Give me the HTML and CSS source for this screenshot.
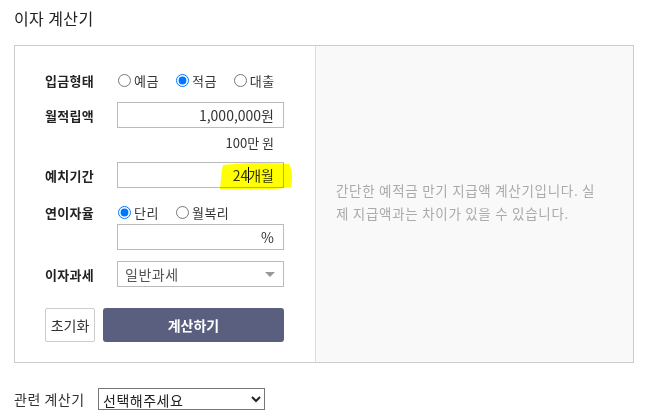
FILE: index.html
```html
<!doctype html>
<html>
  <head>
    <meta charset="utf-8">
    <title>이자 계산기</title>
    <meta name="viewport" content="width=device-width">
    <link rel="stylesheet" href="styles.css">
  </head>
  <body>
    <div class="page">
      <h2 class="title">이자 계산기</h2>

      <div class="calc">
        <div class="calc-form">
          <div class="row">
            <span class="name">입금형태</span>
            <label class="opt"><input type="radio" name="kind">예금</label>
            <label class="opt"><input type="radio" name="kind" checked>적금</label>
            <label class="opt"><input type="radio" name="kind">대출</label>
          </div>

          <div class="row gap-9">
            <span class="name">월적립액</span>
            <input class="field" type="text" value="1,000,000원">
          </div>
          <div class="note">100만 원</div>

          <div class="row gap-10">
            <span class="name">예치기간</span>
            <div class="mark-wrap">
              <input class="field" type="text" value="24개월">
              <svg class="marker" width="80" height="30" viewBox="0 0 80 30">
                <path d="M6 3 C 25 1, 50 0, 72 2 C 75 6, 76 16, 74 25 C 55 28, 30 28, 3 27 C 4 19, 4 10, 6 3 Z" fill="#ffff00"/>
                <rect x="31" y="5" width="1" height="16" fill="#000"/>
              </svg>
            </div>
          </div>

          <div class="row row-sm gap-12">
            <span class="name">연이자율</span>
            <label class="opt"><input type="radio" name="rate" checked>단리</label>
            <label class="opt"><input type="radio" name="rate">월복리</label>
          </div>
          <div class="row">
            <span class="name"></span>
            <input class="field" type="text" value="%">
          </div>

          <div class="row gap-11">
            <span class="name">이자과세</span>
            <div class="select-wrap">
              <select class="field select">
                <option>일반과세</option>
                <option>비과세</option>
                <option>세금우대</option>
              </select>
            </div>
          </div>

          <div class="buttons">
            <button class="btn-reset">초기화</button>
            <button class="btn-calc">계산하기</button>
          </div>
        </div>

        <div class="calc-info">
          <p>간단한 예적금 만기 지급액 계산기입니다. 실제 지급액과는 차이가 있을 수 있습니다.</p>
        </div>
      </div>

      <div class="related">
        <span>관련 계산기</span>
        <select class="related-select">
          <option>선택해주세요</option>
        </select>
      </div>
    </div>
  </body>
</html>
```

FILE: styles.css
```css
body {
	margin: 0;
	font-family: "Noto Sans CJK KR", "Noto Sans", sans-serif;
	color: #333;
	background: #fff;
}
.page {
	padding: 0 14px;
}
.title {
	margin: 0;
	padding-top: 6px;
	height: 39px;
	font-size: 16px;
	font-weight: normal;
	line-height: 24px;
	letter-spacing: 0.4px;
	color: #222;
}

.calc {
	display: flex;
	width: 620px;
	height: 318px;
	box-sizing: border-box;
	border: 1px solid #ccc;
}
.calc-form {
	width: 300px;
	flex: none;
	box-sizing: border-box;
	padding: 21px 31px 0 30px;
}
.calc-info {
	flex: 1;
	display: flex;
	align-items: center;
	background: #f9f9f9;
	border-left: 1px solid #ddd;
	padding: 0 32px 0 20px;
}
.calc-info p {
	margin: 0 0 4px 0;
	font-size: 13.5px;
	line-height: 23px;
	letter-spacing: 0.7px;
	color: #aaa;
	word-break: break-all;
}

.row {
	display: flex;
	align-items: center;
	height: 26px;
}
.row-sm {
	height: 24px;
}
.gap-9 { margin-top: 9px; }
.gap-10 { margin-top: 10px; }
.gap-11 { margin-top: 11px; }
.gap-12 { margin-top: 12px; }

.name {
	width: 72px;
	flex: none;
	font-size: 13px;
	font-weight: bold;
	letter-spacing: 0.3px;
	color: #222;
}
.opt {
	display: flex;
	flex: none;
	align-items: center;
	white-space: nowrap;
	margin-right: 16px;
	font-size: 13px;
	letter-spacing: 0.5px;
	color: #333;
}
.opt:last-child {
	margin-right: 0;
}
.opt input {
	margin: 0 3px 0 1px;
	width: 13px;
	height: 13px;
}

.field {
	width: 167px;
	height: 26px;
	box-sizing: border-box;
	border: 1px solid #bbb;
	padding: 0 9px;
	font-family: inherit;
	font-size: 14px;
	color: #333;
	text-align: right;
	background: #fff;
	outline: none;
}
.note {
	margin-top: 6px;
	height: 18px;
	line-height: 18px;
	padding-right: 10px;
	font-size: 13px;
	text-align: right;
	color: #333;
}

.mark-wrap {
	position: relative;
	width: 167px;
	height: 26px;
}
.marker {
	position: absolute;
	left: 100px;
	top: 0;
	mix-blend-mode: multiply;
	pointer-events: none;
}

.select-wrap {
	position: relative;
}
.select {
	appearance: none;
	-webkit-appearance: none;
	text-align: left;
	padding-left: 7px;
	font-size: 14px;
	letter-spacing: 0.5px;
	color: #555;
	border-radius: 0;
}
.select-wrap::after {
	content: "";
	position: absolute;
	right: 9px;
	top: 11px;
	border-left: 5px solid transparent;
	border-right: 5px solid transparent;
	border-top: 5px solid #999;
	pointer-events: none;
}

.buttons {
	display: flex;
	gap: 8px;
	margin-top: 21px;
}
.buttons button {
	height: 34px;
	font-family: inherit;
	font-size: 14px;
	cursor: pointer;
}
.btn-reset {
	width: 50px;
	padding: 0;
	border: 1px solid #ccc;
	border-radius: 2px;
	background: #fff;
	color: #333;
}
.btn-calc {
	flex: 1;
	border: none;
	border-radius: 3px;
	background: #5a5f80;
	color: #fff;
	font-weight: bold;
}

.related {
	display: flex;
	align-items: center;
	margin-top: 25px;
	font-size: 14px;
	letter-spacing: 0.5px;
	color: #333;
}
.related span {
	width: 84px;
}
.related-select {
	width: 167px;
	height: 22px;
	font-family: inherit;
	font-size: 14px;
	letter-spacing: 0.5px;
	color: #222;
	border: 1px solid #767676;
	background: #fff;
	border-radius: 0;
}
```
